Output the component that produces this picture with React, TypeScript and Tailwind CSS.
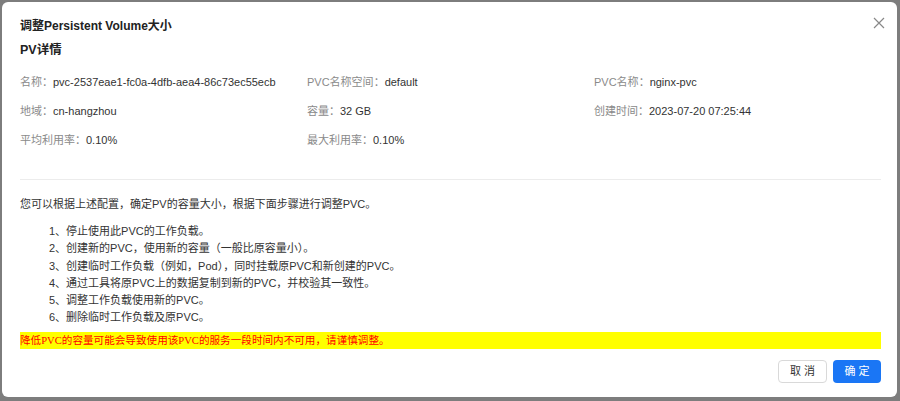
import React from "react";

const sans = { fontFamily: '"Liberation Sans", "Noto Sans CJK SC", sans-serif' } as React.CSSProperties;

function Field({ label, value }: { label: string; value: string }) {
  return (
    <div className="flex items-center h-[29px] text-[11px] whitespace-nowrap">
      <span className="text-[#8a8a8a]">{label}：</span>
      <span className="text-[#333]">{value}</span>
    </div>
  );
}

export default function App() {
  const steps = [
    "1、停止使用此PVC的工作负载。",
    "2、创建新的PVC，使用新的容量（一般比原容量小）。",
    "3、创建临时工作负载（例如，Pod），同时挂载原PVC和新创建的PVC。",
    "4、通过工具将原PVC上的数据复制到新的PVC，并校验其一致性。",
    "5、调整工作负载使用新的PVC。",
    "6、删除临时工作负载及原PVC。",
  ];
  return (
    <div className="w-[900px] h-[401px] bg-[#7d7d7d] pl-[2px] pt-[2px] pb-[4px] pr-[3px]" style={sans}>
      <div className="h-full w-full bg-white rounded-[6px] flex flex-col pl-[18px] pr-[16px] pt-[14px] relative">
        <div className="text-[12px] font-semibold text-[#222] leading-[20px] whitespace-nowrap">调整Persistent Volume大小</div>
        <button className="absolute right-[11px] top-[14px] text-[#888]">
          <svg width="14" height="14" viewBox="0 0 14 14" fill="none" stroke="currentColor" strokeWidth="1.2">
            <path d="M2 2 L12 12 M12 2 L2 12" />
          </svg>
        </button>
        <div className="text-[12.5px] font-semibold text-[#222] leading-[20px] mt-[4px]">PV详情</div>
        <div className="grid grid-cols-3 mt-[8px]">
          <Field label="名称" value="pvc-2537eae1-fc0a-4dfb-aea4-86c73ec55ecb" />
          <Field label="PVC名称空间" value="default" />
          <Field label="PVC名称" value="nginx-pvc" />
          <Field label="地域" value="cn-hangzhou" />
          <Field label="容量" value="32 GB" />
          <Field label="创建时间" value="2023-07-20 07:25:44" />
          <Field label="平均利用率" value="0.10%" />
          <Field label="最大利用率" value="0.10%" />
        </div>
        <div className="border-t border-[#ececec] mt-[24px]" />
        <div className="text-[11px] text-[#333] mt-[16px] leading-[17px] whitespace-nowrap">
          您可以根据上述配置，确定PV的容量大小，根据下面步骤进行调整PVC。
        </div>
        <ol className="text-[11px] text-[#333] mt-[10px] pl-[29px] leading-[17.3px] whitespace-nowrap">
          {steps.map((s) => (
            <li key={s}>{s}</li>
          ))}
        </ol>
        <div
          className="mt-[5px] bg-[#ffff00] text-[#ff0000] text-[10.6px] leading-[17px] h-[17px] whitespace-nowrap"
          style={{ fontFamily: '"Liberation Serif", "Noto Sans CJK SC", serif' }}
        >
          降低PVC的容量可能会导致使用该PVC的服务一段时间内不可用，请谨慎调整。
        </div>
        <div className="flex justify-end gap-[6px] mt-[11px]">
          <button className="w-[49px] h-[23px] rounded-[4px] border border-[#d9d9d9] bg-white text-[11px] text-[#333] tracking-[3px] pl-[3px]">
            取消
          </button>
          <button className="w-[48px] h-[23px] rounded-[4px] bg-[#1a76f5] text-[11px] text-white tracking-[3px] pl-[3px]">
            确定
          </button>
        </div>
      </div>
    </div>
  );
}
